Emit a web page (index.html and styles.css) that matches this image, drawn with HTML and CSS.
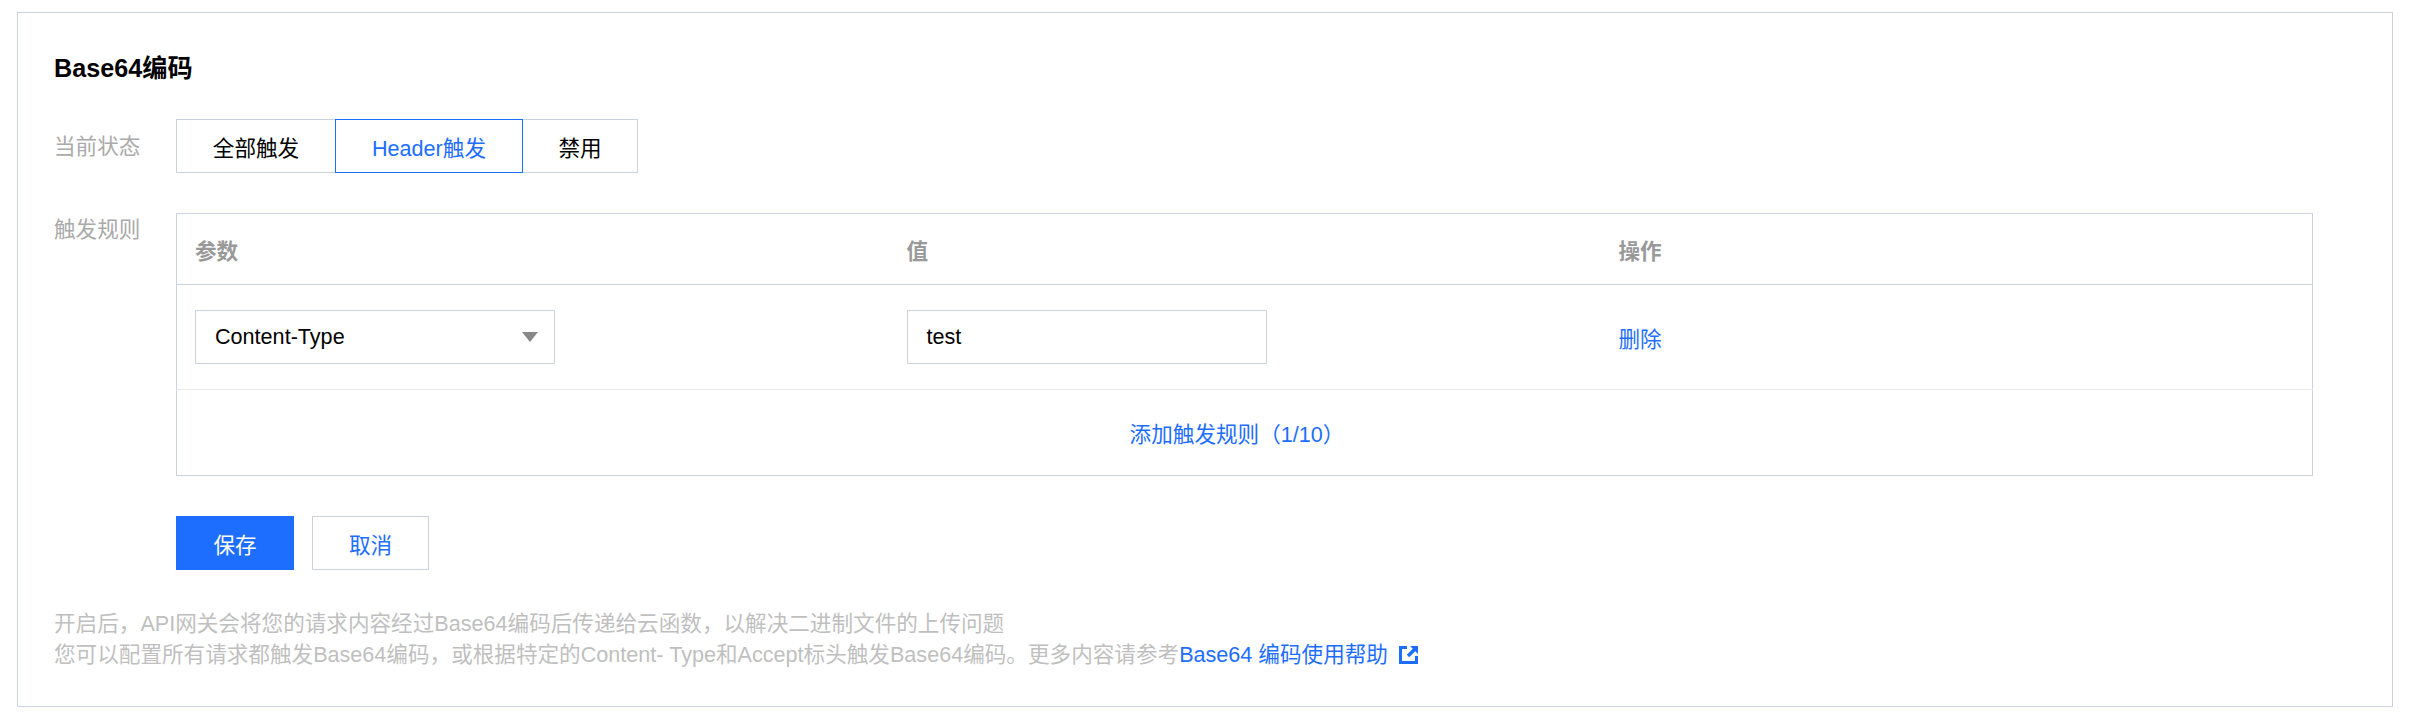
FILE: index.html
```html
<!DOCTYPE html>
<html lang="zh-CN">
<head>
    <meta charset="UTF-8">
    <meta name="viewport" content="width=device-width, initial-scale=1.0">
    <title>Base64编码</title>
    <link rel="stylesheet" href="styles.css">
</head>
<body>
    <div class="card">
        <h2 class="card-title">Base64编码</h2>

        <div class="form-row">
            <div class="form-label label-status">当前状态</div>
            <div class="segment">
                <button class="segment-item">全部触发</button>
                <button class="segment-item active">Header触发</button>
                <button class="segment-item">禁用</button>
            </div>
        </div>

        <div class="form-row rules-row">
            <div class="form-label">触发规则</div>
            <table class="rules">
                <thead>
                    <tr>
                        <th>参数</th>
                        <th>值</th>
                        <th>操作</th>
                    </tr>
                </thead>
                <tbody>
                    <tr class="rule">
                        <td>
                            <div class="field select">
                                <span>Content-Type</span>
                                <i class="caret"></i>
                            </div>
                        </td>
                        <td><div class="field">test</div></td>
                        <td><a class="link" href="#">删除</a></td>
                    </tr>
                    <tr class="add-rule">
                        <td colspan="3"><a class="link" href="#">添加触发规则（1/10）</a></td>
                    </tr>
                </tbody>
            </table>
        </div>

        <div class="actions">
            <button class="btn btn-primary">保存</button>
            <button class="btn">取消</button>
        </div>

        <div class="help">
            <p>开启后，API网关会将您的请求内容经过Base64编码后传递给云函数，以解决二进制文件的上传问题</p>
            <p>您可以配置所有请求都触发Base64编码，或根据特定的Content- Type和Accept标头触发Base64编码。更多内容请参考<a class="link" href="#">Base64 编码使用帮助<svg class="ext-icon" viewBox="0 0 19 18"><path d="M0 0h8v3H3v12h13v-5h3v8H0z" fill="currentColor"/><path d="M11 0h8v8l-2.8-2.8-6 6-2.4-2.4 6-6z" fill="currentColor"/></svg></a></p>
        </div>
    </div>
</body>
</html>
```

FILE: styles.css
```css
* {
    box-sizing: border-box;
}
body {
    margin: 12px 17px 7px;
    font-family: "Liberation Sans", "Noto Sans CJK SC", sans-serif;
    font-size: 21.6px;
    color: #000;
    background: #fff;
}
button {
    font: inherit;
    background: #fff;
    margin: 0;
}
.card {
    height: 695px;
    border: 1px solid #ccd3e0;
    padding: 39px 79px 0 36px;
}
.card-title {
    margin: 0 0 35px;
    font-size: 25.2px;
    line-height: 32px;
    font-weight: bold;
}
.form-row {
    display: flex;
}
.form-label {
    flex: 0 0 122px;
    line-height: 32px;
    padding-top: 1px;
    color: #aaa;
}
.label-status {
    height: 54px;
    line-height: 54px;
}
.rules-row {
    margin-top: 40px;
}

.segment {
    display: flex;
    height: 54px;
}
.segment-item {
    height: 54px;
    padding: 0;
    width: 159px;
    border: 1px solid #ccd3e0;
    border-right: 0;
    color: #000;
}
.segment-item:last-child {
    width: 115px;
    border-right: 1px solid #ccd3e0;
}
.segment-item.active {
    width: 188px;
    border: 1px solid #1d6eff;
    color: #1d6eff;
}
.segment-item.active + .segment-item {
    border-left: 0;
}

.rules {
    flex: 1;
    width: 100%;
    table-layout: fixed;
    border-collapse: collapse;
    border: 1px solid #ccd3e0;
}
.rules th, .rules td {
    padding: 0 18px;
    text-align: left;
}
.rules th {
    height: 71px;
    color: #999;
    border-bottom: 1px solid #ccd3e0;
}
.rule td {
    height: 105px;
    border-bottom: 1px solid #e6e8ec;
}
.add-rule td {
    height: 86px;
}
.rules .add-rule td {
    padding-right: 33px;
    text-align: center;
}
.field {
    width: 360px;
    height: 54px;
    line-height: 52px;
    padding: 0 19px;
    border: 1px solid #ccd3e0;
}
.select {
    display: flex;
    justify-content: space-between;
    align-items: center;
}
.caret {
    width: 0;
    height: 0;
    margin-right: -3px;
    border-left: 8px solid transparent;
    border-right: 8px solid transparent;
    border-top: 10px solid #888;
}
.link {
    color: #1d6eff;
    text-decoration: none;
}

.actions {
    display: flex;
    gap: 18px;
    margin: 40px 0 0 122px;
}
.btn {
    width: 117px;
    height: 54px;
    padding: 0;
    border: 1px solid #ccd3e0;
    color: #1d6eff;
}
.btn-primary {
    width: 118px;
    background: #1d6eff;
    border-color: #1d6eff;
    color: #fff;
}

.help {
    margin-top: 38px;
    line-height: 31px;
    color: #bfbfbf;
}
.help p {
    margin: 0;
}
.ext-icon {
    width: 19px;
    height: 18px;
    margin-left: 11px;
    vertical-align: -2px;
}
```
